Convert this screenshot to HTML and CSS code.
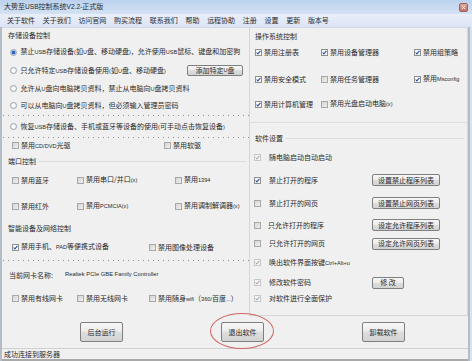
FILE: index.html
```html
<!DOCTYPE html>
<html lang="zh-CN">
<head>
<meta charset="utf-8">
<title>大势至USB控制系统V2.2-正式版</title>
<link rel="stylesheet" href="styles.css">
</head>
<body>
<div class="titlebar">
  <span class="title">大势至<span class="lt">USB</span>控制系统<span class="lt">V2.2-</span>正式版</span>
  <span class="close"><svg width="5" height="5" viewBox="0 0 5 5"><path d="M0.8 0.8L4.2 4.2M4.2 0.8L0.8 4.2" stroke="#fff" stroke-width="0.9"/></svg></span>
</div>
<div class="menubar">
  <span>关于软件</span><span>关于我们</span><span>访问官网</span><span>购买流程</span><span>联系我们</span><span>帮助</span><span>远程协助</span><span>注册</span><span>设置</span><span>更新</span><span>版本号</span>
</div>
<div class="client">
  <div class="main">
    <div class="left">
      <div class="head h15">存储设备控制</div>
      <div class="row h18"><span class="opt"><i class="rb on"></i><span>禁止<span class="lt">USB</span>存储设备<span class="lt">(</span>如<span class="lt">U</span>盘、移动硬盘<span class="lt">)</span>，允许使用<span class="lt">USB</span>鼠标、键盘和加密狗</span></span></div>
      <div class="row h19 split"><span class="opt"><i class="rb"></i><span>只允许特定<span class="lt">USB</span>存储设备使用<span class="lt">(</span>如<span class="lt">U</span>盘、移动硬盘<span class="lt">)</span></span></span><span class="btn btn-add">添加特定<span class="lt">U</span>盘</span></div>
      <div class="row h17"><span class="opt"><i class="rb"></i><span>允许从<span class="lt">U</span>盘向电脑拷贝资料，禁止从电脑向<span class="lt">U</span>盘拷贝资料</span></span></div>
      <div class="row h17"><span class="opt"><i class="rb"></i><span>可以从电脑向<span class="lt">U</span>盘拷贝资料，但必须输入管理员密码</span></span></div>
      <div class="dots first"></div>
      <div class="row h21"><span class="opt"><i class="rb"></i><span>恢复<span class="lt">USB</span>存储设备、手机或蓝牙等设备的使用<span class="lt">(</span>可手动点击恢复设备<span class="lt">)</span></span></span></div>
      <div class="dots"></div>
      <div class="row h15 cols cols-cd"><span class="chk"><i class="cb"></i><span>禁用<span class="lt">CD/DVD</span>光驱</span></span><span class="chk"><i class="cb"></i>禁用软驱</span></div>
      <div class="head h17 line">端口控制</div>
      <div class="row h20 cols cols-port"><span class="chk"><i class="cb"></i>禁用蓝牙</span><span class="chk"><i class="cb"></i><span>禁用串口/并口<span class="lt">(x)</span></span></span><span class="chk"><i class="cb"></i><span>禁用<span class="lt">1394</span></span></span></div>
      <div class="row h32 cols cols-port"><span class="chk"><i class="cb"></i>禁用红外</span><span class="chk"><i class="cb"></i><span>禁用<span class="lt">PCMCIA(x)</span></span></span><span class="chk"><i class="cb"></i><span>禁用调制解调器<span class="lt">(x)</span></span></span></div>
      <div class="head h12">智能设备及网络控制</div>
      <div class="row h26 cols cols-smart"><span class="chk"><i class="cb on"><svg viewBox="0 0 5 5"><path d="M0.6 2.5L1.9 3.9L4.4 0.9"/></svg></i><span>禁用手机、<span class="lt">PAD</span>等便携式设备</span></span><span class="chk"><i class="cb"></i>禁用图像处理设备</span></div>
      <div class="dots"></div>
      <div class="row h28 nic"><span class="nic-label">当前网卡名称:</span><span class="nic-name">Realtek PCIe GBE Family Controller</span></div>
      <div class="row h19 cols cols-net"><span class="chk"><i class="cb"></i>禁用有线网卡</span><span class="chk"><i class="cb"></i>禁用无线网卡</span><span class="chk"><i class="cb"></i><span>禁用随身<span class="lt">wifi</span>（<span class="lt">360/</span>百度<span class="lt">...</span>）</span></span></div>
    </div>
    <div class="right">
      <div class="head h16">操作系统控制</div>
      <div class="os h17"><span class="chk"><i class="cb on"><svg viewBox="0 0 5 5"><path d="M0.6 2.5L1.9 3.9L4.4 0.9"/></svg></i>禁用注册表</span><span class="chk"><i class="cb on"><svg viewBox="0 0 5 5"><path d="M0.6 2.5L1.9 3.9L4.4 0.9"/></svg></i>禁用设备管理器</span><span class="chk"><i class="cb on"><svg viewBox="0 0 5 5"><path d="M0.6 2.5L1.9 3.9L4.4 0.9"/></svg></i>禁用组策略</span></div>
      <div class="os h16 os2"><span class="chk"><i class="cb on"><svg viewBox="0 0 5 5"><path d="M0.6 2.5L1.9 3.9L4.4 0.9"/></svg></i>禁用安全模式</span><span class="chk"><i class="cb"></i>禁用任务管理器</span><span class="chk"><i class="cb on"><svg viewBox="0 0 5 5"><path d="M0.6 2.5L1.9 3.9L4.4 0.9"/></svg></i><span>禁用<span class="lt">Msconfig</span></span></span></div>
      <div class="os h16 os3"><span class="chk"><i class="cb on"><svg viewBox="0 0 5 5"><path d="M0.6 2.5L1.9 3.9L4.4 0.9"/></svg></i>禁用计算机管理</span><span class="chk"><i class="cb"></i><span>禁用光盘启动电脑<span class="lt">(x)</span></span></span></div>
      <div class="soft">
        <div class="head h16 line">软件设置</div>
        <div class="sw h22"><i class="cb dis"><svg viewBox="0 0 5 5"><path d="M0.6 2.5L1.9 3.9L4.4 0.9"/></svg></i><span>随电脑启动自动启动</span></div>
        <div class="sw h24"><i class="cb on"><svg viewBox="0 0 5 5"><path d="M0.6 2.5L1.9 3.9L4.4 0.9"/></svg></i><span>禁止打开的程序</span><span class="btn btn-list">设置禁止程序列表</span></div>
        <div class="sw h22"><i class="cb"></i><span>禁止打开的网页</span><span class="btn btn-list">设置禁止网页列表</span></div>
        <div class="sw h22"><i class="cb"></i><span class="nudge-l">只允许打开的程序</span><span class="btn btn-list">设定允许程序列表</span></div>
        <div class="sw h15"><i class="cb"></i><span>只允许打开的网页</span><span class="btn btn-list">设定允许网页列表</span></div>
        <div class="sw h23"><i class="cb dis"><svg viewBox="0 0 5 5"><path d="M0.6 2.5L1.9 3.9L4.4 0.9"/></svg></i><span>唤出软件界面按键<span class="lt">Ctrl+Alt+u</span></span></div>
        <div class="sw h17"><i class="cb dis"><svg viewBox="0 0 5 5"><path d="M0.6 2.5L1.9 3.9L4.4 0.9"/></svg></i><span>修改软件密码</span><span class="btn btn-edit">修 改</span></div>
        <div class="sw h15"><i class="cb dis"><svg viewBox="0 0 5 5"><path d="M0.6 2.5L1.9 3.9L4.4 0.9"/></svg></i><span>对软件进行全面保护</span></div>
      </div>
    </div>
  </div>
  <div class="actions">
    <span class="btn btn-big">后台运行</span>
    <span class="btn btn-big marked">退出软件<span class="ring"></span></span>
    <span class="btn btn-big">卸载软件</span>
  </div>
  <div class="status">成功连接到服务器</div>
</div>
</body>
</html>
```
FILE: styles.css
```css
* { box-sizing: border-box; margin: 0; padding: 0; }
html, body { width: 472px; height: 361px; overflow: hidden; }
body {
  background: #d6e3f1;
  font-family: "Noto Sans CJK SC", "Noto Sans", sans-serif;
  font-size: 7px;
  line-height: 1;
  color: #2a2a2a;
}
i { font-style: normal; }
.lt { font-family: "Liberation Sans", Arial, sans-serif; font-size: 5.6px; }

.titlebar {
  height: 14px;
  display: flex;
  align-items: center;
  padding-left: 4px;
  background: linear-gradient(#bcd2ee, #d3e2f3);
}
.title .lt { font-size: 6.6px; }
.close {
  margin-left: auto;
  margin-right: 4px;
  width: 9px;
  height: 9px;
  border: 1px solid #a0625c;
  border-radius: 2px;
  background: linear-gradient(#e0a59d, #c46a60);
  display: flex;
  align-items: center;
  justify-content: center;
}
.menubar {
  height: 13px;
  display: flex;
  align-items: center;
  gap: 7.7px;
  padding-left: 7px;
  background: linear-gradient(#e9eef9, #dce4f5);
}

.client {
  height: 334px;
  margin-right: 2px;
  background: #f0f0f0;
  border-left: 2px solid #b4bcc6;
  border-right: 2px solid #b4bcc6;
}
.main {
  height: 289px;
  display: flex;
  border-top: 1px solid #d2d9e4;
}
.left {
  width: 247px;
  padding-left: 5px;
  display: flex;
  flex-direction: column;
}
.right {
  width: 219px;
  height: 288px;
  padding-left: 4px;
  border-left: 1px solid #d7d7d7;
  border-right: 1px solid #d7d7d7;
  border-bottom: 1px solid #d7d7d7;
  display: flex;
  flex-direction: column;
}

.h12 { height: 12px; } .h15 { height: 15px; } .h16 { height: 16px; } .h17 { height: 17px; }
.h18 { height: 18px; } .h19 { height: 19px; } .h20 { height: 20px; } .h21 { height: 21px; }
.h22 { height: 22px; } .h23 { height: 23px; } .h24 { height: 24px; } .h26 { height: 26px; }
.h28 { height: 28px; } .h32 { height: 32px; }

.head { display: flex; align-items: center; padding-left: 1px; flex-shrink: 0; }
.head.line::after {
  content: "";
  flex: 1;
  border-top: 1px solid #dcdcdc;
  margin: 0 3px 0 3px;
}
.row { display: flex; align-items: center; flex-shrink: 0; }
.row.split { justify-content: space-between; padding-right: 6px; }
.opt { display: flex; align-items: center; gap: 3.5px; padding-left: 3px; white-space: nowrap; }
.chk { display: flex; align-items: center; gap: 2px; white-space: nowrap; }

.dots {
  height: 1px;
  margin-left: -4px;
  flex-shrink: 0;
  background: repeating-linear-gradient(to right, #8e8e8e 0 1px, transparent 1px 5px);
}
.dots.first { margin-top: 1px; }

.cols { display: grid; align-items: center; align-content: center; padding-left: 5px; }
.cols-cd { grid-template-columns: 152px auto; }
.cols-port { grid-template-columns: 65px 98px auto; }
.cols-smart { grid-template-columns: 137px auto; }
.cols-net { grid-template-columns: 65px 72px auto; }

.nic { padding-left: 2px; }
.nic-label { width: 56px; }
.nic-name { font-family: "Liberation Sans", Arial, sans-serif; font-size: 5.8px; color: #2a2a2a; }

.rb {
  width: 7px; height: 7px;
  border: 1px solid #9aa5b1;
  border-radius: 50%;
  background: radial-gradient(circle, #ffffff 0 1.5px, #dcdcdc 3px);
  flex-shrink: 0;
}
.rb.on { background: radial-gradient(circle, #2c66c2 0 1.4px, #9ab8e0 2px, #f4f4f4 3px); }

.cb {
  width: 7px; height: 7px;
  border: 1px solid #a8a8a8;
  background: linear-gradient(135deg, #d6d6d6, #efefef);
  display: flex;
  flex-shrink: 0;
}
.cb svg { width: 5px; height: 5px; }
.cb path { fill: none; stroke: #2d4f9c; stroke-width: 1.1; }
.cb.on { background: #fafafa; border-color: #8e8f8f; }
.cb.dis { background: #f6f6f6; border-color: #c8c8c8; }
.cb.dis path { stroke: #b0b0b0; }

.btn {
  display: inline-flex;
  align-items: center;
  justify-content: center;
  border: 1px solid #7f7f7f;
  border-radius: 2px;
  background: linear-gradient(#f7f7f7 0, #ececec 45%, #dedede 50%, #d3d3d3 100%);
  color: #2a2a2a;
  white-space: nowrap;
  flex-shrink: 0;
}
.btn-add { width: 56px; height: 11px; }
.btn-list { width: 68px; height: 12px; }
.btn-edit { width: 32px; height: 12px; }
.btn-big { width: 43px; height: 20px; }

.os {
  display: grid;
  grid-template-columns: 66px 93px auto;
  align-items: center;
  padding-left: 1px;
  flex-shrink: 0;
}
.os2 { margin-top: 10px; }
.os3 { margin-top: 9px; }

.soft {
  margin-top: 10px;
  margin-left: -4px;
  padding-left: 4px;
  padding-top: 7px;
  border-top: 1px solid #dedede;
  display: flex;
  flex-direction: column;
}
.sw {
  display: grid;
  grid-template-columns: 15px 103px auto;
  align-items: center;
  flex-shrink: 0;
}
.nudge-l { margin-left: -1px; }

.actions {
  height: 32px;
  display: flex;
  align-items: flex-start;
  padding: 6px 0 0 78px;
  gap: 98px;
}
.marked { position: relative; }
.ring {
  position: absolute;
  left: -12px;
  top: -10px;
  width: 64px;
  height: 36px;
  border: 1px solid #d46464;
  border-radius: 50%;
}
.status {
  height: 13px;
  display: flex;
  align-items: center;
  padding-left: 2px;
  border-top: 1px solid #d0d0d0;
  border-bottom: 2px solid #a9a9a9;
}
```
